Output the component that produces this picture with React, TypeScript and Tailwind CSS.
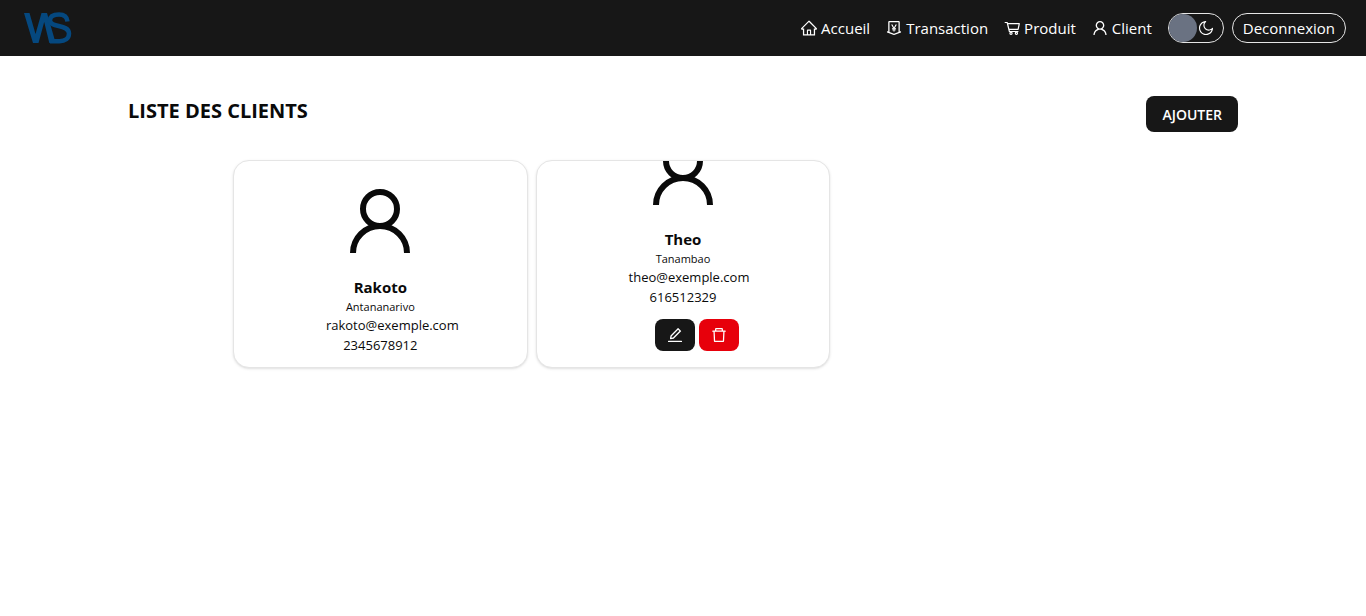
import type { ReactNode } from "react";
import {
  AiOutlineDelete,
  AiOutlineEdit,
  AiOutlineHome,
  AiOutlineMoneyCollect,
  AiOutlineMoon,
  AiOutlineUser,
} from "react-icons/ai";

type Client = { name: string; city: string; email: string; phone: string; active: boolean };

const clients: Client[] = [
  { name: "Rakoto", city: "Antananarivo", email: "rakoto@exemple.com", phone: "2345678912", active: false },
  { name: "Theo", city: "Tanambao", email: "theo@exemple.com", phone: "616512329", active: true },
];

function Logo() {
  return (
    <svg width="48" height="32" viewBox="0 0 48 32" fill="#05487f" aria-label="WS" role="img">
      <path d="M0 1h5.500l6 21L17.500 1h5.500l7.500 26h-3.500l.8 4h-2.500L20.200 10 14.500 31H9z" />
      <path
        d="M43.500 9.500C43 5 40 2.600 35 2.600c-5.500 0-9 2-9 5.900C26 16 45 12 45 21.500c0 5-4 7.700-9.500 7.700H26"
        fill="none"
        stroke="#05487f"
        strokeWidth="4.500"
      />
    </svg>
  );
}

function Cart() {
  return (
    <svg width="18" height="18" viewBox="0 0 18 18" fill="none" stroke="currentColor" strokeWidth="1.200" strokeLinejoin="round" aria-hidden="true">
      <path d="M1.700 3.500h2.500l2.200 9h9M4.600 4.700h11.700l-1.200 5.700H6.100" />
      <circle cx="8" cy="14.200" r="1.100" />
      <circle cx="13.400" cy="14.200" r="1.100" />
    </svg>
  );
}

function Avatar() {
  return (
    <svg className="shrink-0" width="60" height="64" viewBox="0 0 60 64" fill="none" stroke="#0a0a0a" strokeWidth="6" aria-hidden="true">
      <circle cx="30" cy="20" r="17" />
      <path d="M3 64a27 27 0 0 1 54 0" />
    </svg>
  );
}

function NavLink({ icon, children }: { icon: ReactNode; children: ReactNode }) {
  return (
    <a href="#" className="flex items-center gap-[3px]">
      {icon}
      {children}
    </a>
  );
}

function ClientCard({ client }: { client: Client }) {
  return (
    <li className="flex h-52 flex-col items-center justify-end overflow-hidden rounded-2xl border border-neutral-200 bg-white pb-3 shadow-sm">
      <Avatar />
      <h2 className="mt-6 text-[15px] leading-5 font-bold">{client.name}</h2>
      <p className="text-[11px] leading-5">{client.city}</p>
      <p className={client.active ? "pl-3 text-[13px] leading-4" : "pl-6 text-[13px] leading-4"}>{client.email}</p>
      <p className="pt-0.5 text-[13px] leading-5">{client.phone}</p>
      {client.active && (
        <div className="flex gap-1 pt-3 pb-1 pl-7">
          <button type="button" aria-label="Modifier" className="flex h-8 w-10 items-center justify-center rounded-lg bg-[#171717] text-white">
            <AiOutlineEdit size={18} />
          </button>
          <button type="button" aria-label="Supprimer" className="flex h-8 w-10 items-center justify-center rounded-lg bg-[#e7000b] text-white">
            <AiOutlineDelete size={18} />
          </button>
        </div>
      )}
    </li>
  );
}

export default function App() {
  return (
    <div className="min-h-screen bg-white font-['Segoe_UI','Open_Sans',sans-serif] text-[#0a0a0a]">
      <header className="flex h-14 items-center justify-between bg-[#171717] pr-5 pl-6 text-white">
        <a href="#" aria-label="WS">
          <Logo />
        </a>
        <div className="flex items-center gap-4">
          <nav className="flex items-center gap-[15px] text-[15px]">
            <NavLink icon={<AiOutlineHome size={18} />}>Accueil</NavLink>
            <NavLink icon={<AiOutlineMoneyCollect size={18} />}>Transaction</NavLink>
            <NavLink icon={<Cart />}>Produit</NavLink>
            <NavLink icon={<AiOutlineUser size={18} />}>Client</NavLink>
          </nav>
          <div className="flex gap-2">
            <button type="button" aria-label="Thème sombre" className="flex h-[30px] w-14 items-center rounded-full border border-neutral-200">
              <span className="size-7 rounded-full bg-[#6a7282]" />
              <AiOutlineMoon size={18} />
            </button>
            <button type="button" className="h-[30px] rounded-full border border-neutral-200 px-[10px] text-[15px] leading-6">
              Deconnexion
            </button>
          </div>
        </div>
      </header>
      <main className="px-32 pt-10">
        <div className="flex items-start justify-between">
          <h1 className="text-[20px] leading-[30px] font-bold">LISTE DES CLIENTS</h1>
          <button type="button" className="h-9 rounded-lg bg-[#171717] px-4 text-[14px] font-semibold text-white">
            AJOUTER
          </button>
        </div>
        <ul className="mx-[105px] mt-7 grid grid-cols-3 gap-2">
          {clients.map((client) => (
            <ClientCard key={client.name} client={client} />
          ))}
        </ul>
      </main>
    </div>
  );
}
